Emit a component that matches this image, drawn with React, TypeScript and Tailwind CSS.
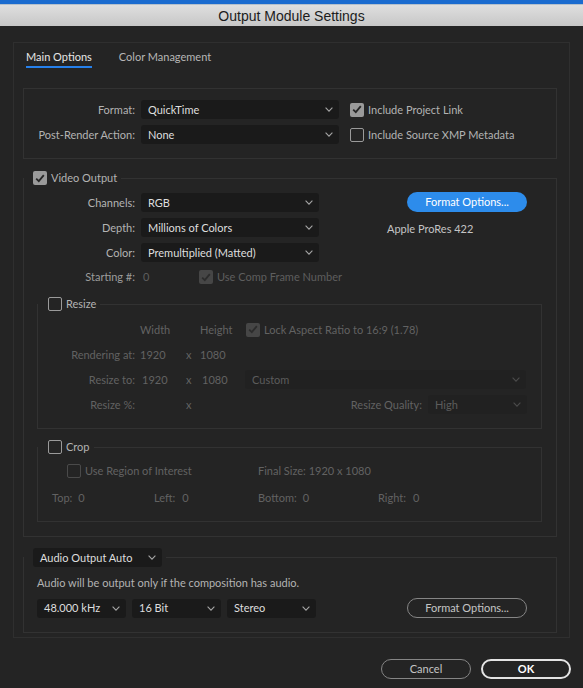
import type { ReactNode } from "react";

function Chevron({ dim }: { dim?: boolean }) {
  return (
    <svg
      width="8"
      height="5"
      viewBox="0 0 8 5"
      fill="none"
      className={dim ? "text-[#4c4c4c]" : "text-[#a6a6a6]"}
    >
      <path d="M0.6 0.7L4 4.1L7.4 0.7" stroke="currentColor" strokeWidth="1.1" />
    </svg>
  );
}

function Select({
  value,
  className = "",
  dim,
}: {
  value: string;
  className?: string;
  dim?: boolean;
}) {
  return (
    <div
      className={`flex h-[19px] shrink-0 items-center justify-between rounded-[3px] pl-[7px] pr-[6px] ${
        dim ? "bg-[#212121] text-[#5c5c5c]" : "bg-[#1a1a1a] text-[#dedede]"
      } ${className}`}
    >
      <span>{value}</span>
      <Chevron dim={dim} />
    </div>
  );
}

function Check({ checked, dim }: { checked?: boolean; dim?: boolean }) {
  if (checked) {
    return (
      <span
        className={`flex h-[14px] w-[14px] shrink-0 items-center justify-center rounded-[2px] ${
          dim ? "bg-[#464646]" : "bg-[#9a9a9a]"
        }`}
      >
        <svg width="10" height="9" viewBox="0 0 10 9" fill="none">
          <path
            d="M1.2 4.7L3.8 7.2L8.8 1.2"
            stroke={dim ? "#2c2c2c" : "#262626"}
            strokeWidth="1.8"
          />
        </svg>
      </span>
    );
  }
  return (
    <span
      className={`block h-[14px] w-[14px] shrink-0 rounded-[2px] border-[1.5px] ${
        dim ? "border-[#4a4a4a]" : "border-[#9a9a9a]"
      }`}
    />
  );
}

function Box({
  legend,
  className = "",
  children,
}: {
  legend: ReactNode;
  className?: string;
  children: ReactNode;
}) {
  return (
    <fieldset className={`border border-[#323232] ${className}`}>
      <legend className="pr-[4px]">{legend}</legend>
      {children}
    </fieldset>
  );
}

export default function App() {
  return (
    <div className="flex h-[688px] w-[583px] flex-col overflow-hidden bg-[#242424] font-['Lato',sans-serif] text-[11px] leading-[16px] text-[#b3b3b3]">
      <div className="h-[4px] bg-[#1a6bcf]" />
      <div className="flex h-[22px] items-center justify-center border-t border-[#b4c0cc] bg-gradient-to-b from-[#dfdfdf] to-[#c7c7c7] font-['Liberation_Sans',Arial,sans-serif] text-[14px] text-[#1c1c1c]">
        Output Module Settings
      </div>

      <div className="mx-[13px] mt-[16px] border border-[#2f2f2f] pb-[4px]">
        {/* tabs */}
        <div className="flex gap-[27px] pl-[12px] pt-[6px]">
          <span className="border-b-2 border-[#2680eb] pb-[1px] text-[#e6e6e6]">
            Main Options
          </span>
          <span className="pb-[3px] text-[#b6b6b6]">Color Management</span>
        </div>

        {/* format */}
        <div className="ml-[9px] mr-[12px] mt-[20px] flex flex-col gap-[6px] border border-[#323232] pb-[14px] pt-[11px]">
          <div className="flex items-center">
            <span className="w-[111px] text-right">Format:</span>
            <Select value="QuickTime" className="ml-[6px] w-[198px]" />
            <span className="ml-[11px]">
              <Check checked />
            </span>
            <span className="ml-[4px]">Include Project Link</span>
          </div>
          <div className="flex items-center">
            <span className="w-[111px] text-right">Post-Render Action:</span>
            <Select value="None" className="ml-[6px] w-[198px]" />
            <span className="ml-[11px]">
              <Check />
            </span>
            <span className="ml-[4px]">Include Source XMP Metadata</span>
          </div>
        </div>

        {/* video output */}
        <Box
          className="ml-[9px] mr-[12px] mt-[11px] pb-[14px]"
          legend={
            <div className="ml-[9px] flex items-center gap-[4px]">
              <Check checked />
              <span>Video Output</span>
            </div>
          }
        >
          <div className="flex pt-[7px]">
            <div className="flex flex-col gap-[6px]">
              <div className="flex items-center">
                <span className="w-[111px] text-right">Channels:</span>
                <Select value="RGB" className="ml-[6px] w-[178px]" />
              </div>
              <div className="flex items-center">
                <span className="w-[111px] text-right">Depth:</span>
                <Select value="Millions of Colors" className="ml-[6px] w-[178px]" />
              </div>
              <div className="flex items-center">
                <span className="w-[111px] text-right">Color:</span>
                <Select value="Premultiplied (Matted)" className="ml-[6px] w-[178px]" />
              </div>
            </div>
            <div className="-mt-[1px] ml-[68px] flex flex-col">
              <div className="ml-[20px] flex h-[20px] w-[120px] items-center justify-center rounded-full bg-[#2d8ceb] text-white">
                Format Options...
              </div>
              <span className="mt-[9px] text-[#c4c4c4]">Apple ProRes 422</span>
            </div>
          </div>

          <div className="mt-[7px] flex items-center">
            <span className="w-[111px] text-right text-[#9c9c9c]">Starting #:</span>
            <span className="ml-[8px] w-[56px] text-[#5e5e5e]">0</span>
            <Check checked dim />
            <span className="ml-[4px] text-[#5e5e5e]">Use Comp Frame Number</span>
          </div>

          {/* resize */}
          <Box
            className="ml-[13px] mr-[14px] mt-[11px] pb-[14px] text-[#626262]"
            legend={
              <div className="ml-[10px] flex items-center gap-[4px] text-[#b3b3b3]">
                <Check />
                <span>Resize</span>
              </div>
            }
          >
            <div className="flex flex-col gap-[6px] pt-[8px]">
              <div className="flex h-[19px] items-center">
                <span className="w-[102px]" />
                <span className="w-[60px]">Width</span>
                <span className="w-[46px]">Height</span>
                <Check checked dim />
                <span className="ml-[4px]">Lock Aspect Ratio to 16:9 (1.78)</span>
              </div>
              <div className="flex h-[19px] items-center">
                <span className="w-[97px] text-right">Rendering at:</span>
                <span className="ml-[5px] w-[46px]">1920</span>
                <span className="w-[14px]">x</span>
                <span>1080</span>
              </div>
              <div className="flex h-[19px] items-center">
                <span className="w-[97px] text-right">Resize to:</span>
                <span className="ml-[7px] w-[44px]">1920</span>
                <span className="w-[16px]">x</span>
                <span className="w-[43px]">1080</span>
                <Select value="Custom" dim className="w-[281px]" />
              </div>
              <div className="flex h-[19px] items-center">
                <span className="w-[97px] text-right">Resize %:</span>
                <span className="ml-[51px] w-[14px]">x</span>
                <span className="ml-auto">Resize Quality:</span>
                <Select value="High" dim className="ml-[6px] mr-[14px] w-[99px]" />
              </div>
            </div>
          </Box>

          {/* crop */}
          <Box
            className="ml-[13px] mr-[14px] mt-[10px] pb-[15px] text-[#626262]"
            legend={
              <div className="ml-[10px] flex items-center gap-[4px] text-[#b3b3b3]">
                <Check />
                <span>Crop</span>
              </div>
            }
          >
            <div className="flex items-center pl-[29px] pt-[8px]">
              <div className="flex w-[191px] items-center gap-[4px]">
                <Check dim />
                <span>Use Region of Interest</span>
              </div>
              <span>Final Size: 1920 x 1080</span>
            </div>
            <div className="mt-[11px] flex items-center pl-[14px]">
              <div className="flex w-[102px] gap-[6px]">
                <span>Top:</span>
                <span>0</span>
              </div>
              <div className="flex w-[104px] gap-[7px]">
                <span>Left:</span>
                <span>0</span>
              </div>
              <div className="flex w-[120px] gap-[6px]">
                <span>Bottom:</span>
                <span>0</span>
              </div>
              <div className="flex gap-[7px]">
                <span>Right:</span>
                <span>0</span>
              </div>
            </div>
          </Box>
        </Box>

        {/* audio */}
        <Box
          className="ml-[9px] mr-[12px] mt-[11px] pb-[14px]"
          legend={
            <div className="ml-[9px]">
              <Select value="Audio Output Auto" className="w-[129px]" />
            </div>
          }
        >
          <div className="pl-[13px] pt-[8px]">
            <p>Audio will be output only if the composition has audio.</p>
            <div className="mt-[7px] flex items-center gap-[6px]">
              <Select value="48.000 kHz" className="w-[89px]" />
              <Select value="16 Bit" className="w-[89px]" />
              <Select value="Stereo" className="w-[89px]" />
              <div className="ml-[85px] flex h-[20px] w-[120px] items-center justify-center rounded-full border border-[#858585] text-[#c4c4c4]">
                Format Options...
              </div>
            </div>
          </div>
        </Box>
      </div>

      <div className="mt-[21px] flex justify-end gap-[10px] pr-[12px]">
        <div className="flex h-[20px] w-[90px] items-center justify-center rounded-full border border-[#858585] text-[#c4c4c4]">
          Cancel
        </div>
        <div className="flex h-[20px] w-[90px] items-center justify-center rounded-full border-2 border-[#e4e4e4] font-bold text-white">
          OK
        </div>
      </div>
    </div>
  );
}
